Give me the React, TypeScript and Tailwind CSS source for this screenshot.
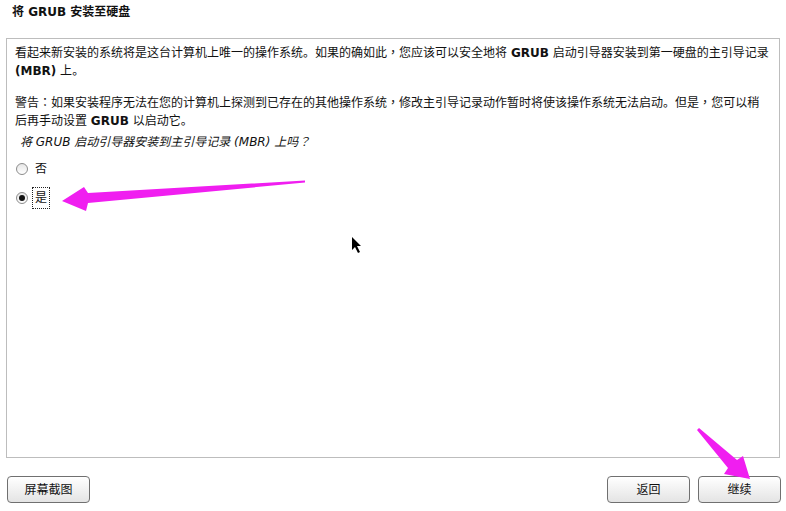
import React from "react";

const font = { fontFamily: '"DejaVu Sans", "Noto Sans CJK SC", sans-serif' };

// full-width punctuation, DejaVu draws these narrow; TC centres them like the reference
function P({ c }: { c: string }) {
  return <span style={{ fontFamily: c === "。" ? '"Noto Sans CJK SC"' : '"Noto Sans CJK TC"' }}>{c}</span>;
}

function Line({ children, className = "" }: { children: React.ReactNode; className?: string }) {
  return <div className={`h-[18px] leading-[18px] whitespace-nowrap ${className}`}>{children}</div>;
}

function Radio({ checked }: { checked?: boolean }) {
  return (
    <span className="w-[12px] h-[12px] rounded-full border border-[#8c8c8c] bg-gradient-to-b from-[#e6e6e6] to-white flex items-center justify-center shrink-0">
      {checked && <span className="w-[6px] h-[6px] rounded-full bg-[#111]"></span>}
    </span>
  );
}

function Btn({ label }: { label: string }) {
  return (
    <button className="w-[83px] h-[27px] rounded-[4px] border border-[#707070] bg-gradient-to-b from-white to-[#e4e4e4] text-[12px] text-[#111] flex items-center justify-center shadow-[inset_0_1px_0_#fff]">
      {label}
    </button>
  );
}

export default function App() {
  return (
    <div className="relative w-[786px] h-[511px] bg-white text-[#111] overflow-hidden" style={font}>
      {/* Title */}
      <div className="h-[38px] pl-[12px] pt-[4px] text-[12px] leading-[16px] font-bold">
        将 GRUB 安装至硬盘
      </div>

      {/* Panel */}
      <div className="mx-[6px] h-[420px] border border-[#bdbdbd] pl-[8px] pt-[4px] text-[12px]">
        <Line>
          看起来新安装的系统将是这台计算机上唯一的操作系统<P c="。" />如果的确如此<P c="，" />您应该可以安全地将 <b>GRUB</b> 启动引导器安装到第一硬盘的主引导记录
        </Line>
        <Line>
          <b>(MBR)</b> 上<P c="。" />
        </Line>
        <Line className="mt-[14px]">
          警告<P c="：" />如果安装程序无法在您的计算机上探测到已存在的其他操作系统<P c="，" />修改主引导记录动作暂时将使该操作系统无法启动<P c="。" />但是<P c="，" />您可以稍
        </Line>
        <Line>
          后再手动设置 <b>GRUB</b> 以启动它<P c="。" />
        </Line>
        <Line className="italic mt-[3px] pl-[5px]">
          将 GRUB 启动引导器安装到主引导记录 (MBR) 上吗<P c="？" />
        </Line>
        <div className="mt-[8px] flex flex-col gap-[7px] text-[12px]">
          <label className="flex items-center gap-[5px] h-[22px] pl-[1px]">
            <Radio />
            <span className="px-[2px]">否</span>
          </label>
          <label className="flex items-center gap-[4px] h-[22px] pl-[1px]">
            <Radio checked />
            <span className="px-[2px] h-[22px] flex items-center border border-dotted border-[#222]">是</span>
          </label>
        </div>
      </div>

      {/* Footer */}
      <div className="flex justify-between pt-[18px] pl-[7px] pr-[5px]">
        <Btn label="屏幕截图" />
        <div className="flex gap-[8px]">
          <Btn label="返回" />
          <Btn label="继续" />
        </div>
      </div>

      {/* Annotation arrows */}
      <svg className="absolute left-0 top-0 pointer-events-none" width="786" height="511">
        <polygon
          points="305,180.5 88,193 84,187 62,201 86,211 88,203 305,182.5"
          fill="#f01ef0"
        />
        <polygon
          points="697,430 728,468 724,474 750,479 743,456 737,460 699,428"
          fill="#f01ef0"
        />
        {/* mouse pointer */}
        <path d="M352,237 L352,250 L355,247 L358,253 L360,252 L357,246 L361,246 Z" fill="#000" />
      </svg>
    </div>
  );
}
